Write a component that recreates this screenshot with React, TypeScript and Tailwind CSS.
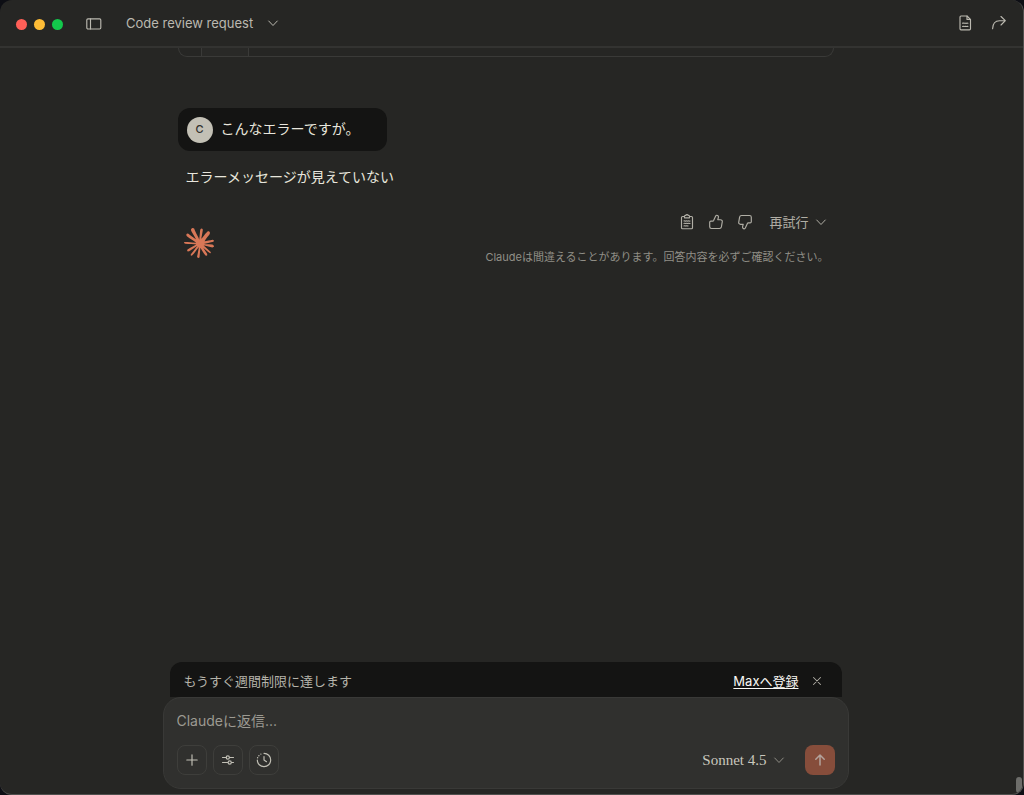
import { useState } from "react";
import type { ReactNode } from "react";

const CLAUDE_MARK =
  "m4.7144 15.9555 4.7174-2.6471.079-.2307-.079-.1275h-.2307l-.7893-.0486-2.6956-.0729-2.3375-.0971-2.2646-.1214-.5707-.1215-.5343-.7042.0546-.3522.4797-.3218.686.0608 1.5179.1032 2.2767.1578 1.6514.0972 2.4468.255h.3886l.0546-.1579-.1336-.0971-.1032-.0972L6.973 9.8356l-2.55-1.6879-1.3356-.9714-.7225-.4918-.3643-.4614-.1578-1.0078.6557-.7225.8803.0607.2246.0607.8925.686 1.9064 1.4754 2.4893 1.8336.3643.3035.1457-.1032.0182-.0728-.164-.2733-1.3539-2.4467-1.445-2.4893-.6435-1.032-.17-.6194c-.0607-.255-.1032-.4674-.1032-.7285L6.287.1335 6.6997 0l.9957.1336.419.3642.6192 1.4147 1.0018 2.2282 1.5543 3.0296.4553.8985.2429.8318.091.255h.1579v-.1457l.1275-1.706.2368-2.0947.2307-2.6957.0789-.7589.3764-.9107.7468-.4918.5828.2793.4797.686-.0668.4433-.2853 1.8517-.5586 2.9021-.3643 1.9429h.2125l.2429-.2429.9835-1.3053 1.6514-2.0643.7286-.8196.85-.9046.5464-.4311h1.0321l.759 1.1293-.34 1.1657-1.0625 1.3478-.8804 1.1414-1.2628 1.7-.7893 1.36.0729.1093.1882-.0183 2.8535-.607 1.5421-.2794 1.8396-.3157.8318.3886.091.3946-.3278.8075-1.967.4857-2.3072.4614-3.4364.8136-.0425.0304.0486.0607 1.5482.1457.6618.0364h1.621l3.0175.2247.7892.522.4736.6376-.079.4857-1.2142.6193-1.6393-.3886-3.825-.9107-1.3113-.3279h-.1822v.1093l1.0929 1.0686 2.0035 1.8092 2.5075 2.3314.1275.5768-.3218.4554-.34-.0486-2.2039-1.6575-.85-.7468-1.9246-1.621h-.1275v.17l.4432.6496 2.3436 3.5214.1214 1.0807-.17.3521-.6071.2125-.6679-.1214-1.3721-1.9246L14.38 17.959l-1.1414-1.9428-.1397.079-.674 7.2552-.3156.3703-.7286.2793-.6071-.4614-.3218-.7468.3218-1.4753.3886-1.9246.3157-1.53.2853-1.9004.17-.6314-.0121-.0425-.1397.0182-1.4328 1.9672-2.1796 2.9446-1.7243 1.8456-.4128.164-.7164-.3704.0667-.6618.4008-.5889 2.386-3.0357 1.4389-1.882.929-1.0868-.0062-.1579h-.0546l-6.3385 4.1164-1.1293.1457-.4857-.4554.0608-.7467.2307-.2429 1.9064-1.3114Z";

function Icon({ children, className = "size-4" }: { children: ReactNode; className?: string }) {
  return (
    <svg
      viewBox="0 0 16 16"
      className={`shrink-0 ${className}`}
      fill="none"
      stroke="currentColor"
      strokeWidth="1.15"
      strokeLinecap="round"
      strokeLinejoin="round"
      aria-hidden="true"
    >
      {children}
    </svg>
  );
}

function Chevron() {
  return (
    <Icon className="size-4">
      <path d="M3.700 6 8 10.500 12.300 6" strokeWidth="1" />
    </Icon>
  );
}

function ThumbPath() {
  return (
    <path d="M1.700 8.300c0-.7.5-1.200 1.200-1.200h1.800c.4 0 .7-.2.9-.5L7.700 1.900c.2-.4.5-.7 1-.7 1.200 0 2 1 1.700 2.200L9.800 5.700h2.700c1.200 0 2 .9 1.800 2l-.9 5.200c-.2 1-.9 1.600-1.900 1.600H3.400c-.9 0-1.700-.7-1.700-1.700z" />
  );
}

function TitleBar() {
  return (
    <header className="flex h-12 shrink-0 items-center border-b-2 border-[#333331] pr-4 pl-4 text-[#bbb9b0]">
      <div className="flex gap-[7px] pt-[2px]">
        <span className="size-[11px] rounded-full bg-[#ff5f57]" />
        <span className="size-[11px] rounded-full bg-[#febc36]" />
        <span className="size-[11px] rounded-full bg-[#13c94c]" />
      </div>
      <button type="button" aria-label="Sidebar" className="mt-[2px] ml-[23px]">
        <Icon>
          <rect x="0.800" y="2.800" width="14" height="10.200" rx="1.200" />
          <path d="M4.500 2.800v10.200" />
        </Icon>
      </button>
      <button type="button" className="ml-6 flex items-center gap-3 text-[13px] leading-5">
        Code review request
        <Chevron />
      </button>
      <div className="ml-auto flex items-center gap-[18px]">
        <button type="button" aria-label="Files">
          <Icon>
            <path d="M4 1h6l3.500 3.500v9.300c0 .6-.4 1-1 1H4c-.6 0-1-.4-1-1V2c0-.6.4-1 1-1z" />
            <path d="M10 1v3.500h3.500M5.500 8.200c.8-.6 1.200.4 2 0s1.200.4 2 0 1 .2 1.400 0M5.500 11.400c.8-.6 1.200.4 2 0s1.200.4 2 0 1 .2 1.400 0" />
          </Icon>
        </button>
        <button type="button" aria-label="Share">
          <Icon>
            <path d="M10 1.500 14.300 5.700 10 10M14.300 5.700H8.500c-4 0-6.700 3-6.900 8" />
          </Icon>
        </button>
      </div>
    </header>
  );
}

function Conversation() {
  return (
    <main className="min-h-0 flex-1 overflow-hidden pr-3">
      <div className="mx-auto w-full max-w-[656px]">
        <div className="flex h-[9px] rounded-b-[10px] border-x border-b border-[#3a3a38]">
          <div className="w-[22px]" />
          <div className="w-12 border-x border-[#3a3a38] bg-[#292927]" />
        </div>

        <div className="mt-[51px] flex h-[43px] w-fit items-center gap-2 rounded-xl bg-[#141413] pr-7 pl-[9px] text-[#e8e6dd]">
          <span className="flex size-[26px] items-center justify-center rounded-full bg-[#c3c0b5] text-[11px] font-medium text-[#30302e]">
            C
          </span>
          <p className="pb-[2px] text-[14px] leading-5">こんなエラーですが。</p>
        </div>

        <p className="mt-4 px-2 text-[14px] leading-5 text-[#e8e6dd]">エラーメッセージが見えていない</p>

        <div className="mt-[23px] flex items-start justify-between pr-[5px] pl-[6px]">
          <svg viewBox="0 0 24 24" className="mt-[18px] size-[30px] text-[#d97757]" fill="currentColor" aria-hidden="true">
            <path d={CLAUDE_MARK} />
          </svg>
          <div className="flex flex-col items-end text-[#b0aea5]">
            <div className="flex h-6 items-center gap-[13px]">
              <button type="button" aria-label="Copy">
                <Icon>
                  <path d="M5.500 2.500H3.500c-.6 0-1 .4-1 1v10.200c0 .6.4 1 1 1h9c.6 0 1-.4 1-1V3.500c0-.6-.4-1-1-1h-2" />
                  <path d="M5.500 2.200c0-.4.3-.7.7-.7h.5c.3-1.200 2.300-1.200 2.600 0h.5c.4 0 .7.3.7.7v1.600h-5z" />
                  <path d="M5 7c.8-.6 1.200.4 2 0s1.200.4 2 0 1.200.4 2 0M5 9.400c.8-.6 1.200.4 2 0s1.200.4 2 0 1.200.4 2 0M5 11.900c.8-.6 1.200.4 2 0s1.200.4 2 0" />
                </Icon>
              </button>
              <button type="button" aria-label="Good response">
                <Icon>
                  <ThumbPath />
                </Icon>
              </button>
              <button type="button" aria-label="Bad response">
                <Icon className="size-4 rotate-180">
                  <ThumbPath />
                </Icon>
              </button>
              <button type="button" className="ml-[3px] flex items-center gap-1 text-[13px] leading-5">
                再試行
                <Chevron />
              </button>
            </div>
            <p className="mt-[15px] text-[11px] leading-4 text-[#918f87]">
              Claudeは間違えることがあります。回答内容を必ずご確認ください。
            </p>
          </div>
        </div>
      </div>
    </main>
  );
}

function ToolButton({ label, children }: { label: string; children: ReactNode }) {
  return (
    <button
      type="button"
      aria-label={label}
      className="flex size-[30px] items-center justify-center rounded-lg border border-[#3e3e3b] text-[#c2c0b6]"
    >
      {children}
    </button>
  );
}

function Composer() {
  const [message, setMessage] = useState("");
  return (
    <footer className="shrink-0 pr-3 pb-[5px]">
      <div className="mx-auto w-full max-w-[686px]">
        <div className="mx-[7px] flex h-[35px] items-center rounded-t-xl bg-[#141413] pt-[2px] pr-[18px] pl-[14px] text-[13px] leading-5">
          <p className="text-[#b5b3aa]">もうすぐ週間制限に達します</p>
          <a href="#" className="ml-auto text-[#faf9f5] underline underline-offset-2">
            Maxへ登録
          </a>
          <button type="button" aria-label="Close" className="ml-[11px] text-[#b0aea5]">
            <Icon className="size-[14px]">
              <path d="m4 4 8 8M12 4l-8 8" />
            </Icon>
          </button>
        </div>
        <form
          onSubmit={(event) => event.preventDefault()}
          className="rounded-[18px] border border-[#393937] bg-[#30302e] px-[13px] pt-[13px] pb-[13px]"
        >
          <input
            type="text"
            aria-label="Message"
            placeholder="Claudeに返信..."
            value={message}
            onChange={(event) => setMessage(event.target.value)}
            className="block h-5 w-full bg-transparent text-[14px] leading-5 text-[#f0efe8] outline-none placeholder:text-[#9c9a92]"
          />
          <div className="mt-[14px] flex items-center gap-[6px]">
            <ToolButton label="Attach">
              <Icon>
                <path d="M8 2.800v10.400M2.800 8h10.400" />
              </Icon>
            </ToolButton>
            <ToolButton label="Tools">
              <Icon>
                <path d="M2.500 5.500h3.700M9.500 5.500h4M2.500 10.500h5.200M11.500 10.500h2" />
                <circle cx="7.800" cy="5.500" r="1.600" />
                <circle cx="9.700" cy="10.500" r="1.600" />
              </Icon>
            </ToolButton>
            <ToolButton label="Extended thinking">
              <Icon>
                <path d="M8 1.300A6.700 6.700 0 1 1 1.300 8" />
                <path d="M1.600 5.800v0M2.900 3.700v0M4.900 2.100v0" strokeWidth="1.400" />
                <path d="M8 4.500V8l2.500 1.700" />
              </Icon>
            </ToolButton>
            <button
              type="button"
              className="ml-auto flex items-center gap-1 font-['Liberation_Serif',serif] text-[15px] leading-5 text-[#c9c7bd]"
            >
              Sonnet 4.5
              <span className="text-[#8f8d85]">
                <Chevron />
              </span>
            </button>
            <button
              type="submit"
              aria-label="Send"
              className="ml-3 flex size-[30px] items-center justify-center rounded-lg bg-[#864d3b] text-[#b3a39c]"
            >
              <Icon>
                <path d="M8 13v-10M3.800 7.200 8 3l4.200 4.200" strokeWidth="1.500" />
              </Icon>
            </button>
          </div>
        </form>
      </div>
    </footer>
  );
}

export default function App() {
  return (
    <div className="h-screen bg-[#0d0e14]">
      <div className="relative flex h-full flex-col overflow-hidden rounded-xl border-r border-b border-[#50504e] bg-[#262624] font-[Inter,'Noto_Sans_CJK_JP',sans-serif]">
        <TitleBar />
        <Conversation />
        <Composer />
        <div className="absolute right-px bottom-px h-4 w-[6px] rounded-full bg-[#6d6d6a]" />
      </div>
    </div>
  );
}
